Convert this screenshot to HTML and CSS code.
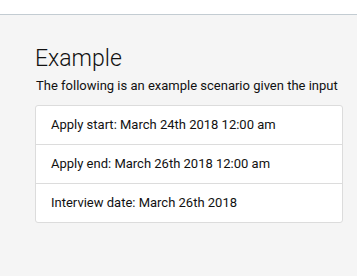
FILE: index.html
```html
<!DOCTYPE html>
<html>
<head>
<meta charset="utf-8">
<link rel="stylesheet" href="styles.css">
</head>
<body>
<div class="topbar"></div>
<main class="content">
  <h2 class="title">Example</h2>
  <p class="lead">The following is an example scenario given the input</p>
  <ul class="list">
    <li class="item">Apply start: March 24th 2018 12:00 am</li>
    <li class="item">Apply end: March 26th 2018 12:00 am</li>
    <li class="item">Interview date: March 26th 2018</li>
  </ul>
</main>
</body>
</html>
```
FILE: styles.css
```css
html, body {
  margin: 0;
  padding: 0;
  height: 100%;
}
body {
  background: #f5f5f5;
  font-family: Roboto, "Liberation Sans", sans-serif;
  color: #111;
}
.topbar {
  height: 14px;
  background: #fff;
  border-bottom: 1px solid #c3ccd2;
}
.content {
  padding: 29px 14px 0 35px;
}
.title {
  margin: 0;
  font-size: 23px;
  font-weight: 300;
  line-height: 29px;
}
.lead {
  margin: 4px 0 10px 1px;
  font-size: 13px;
  line-height: 18px;
}
.list {
  list-style: none;
  margin: 0;
  padding: 0;
  background: #fff;
  border: 1px solid #dcdcdc;
  border-radius: 3px;
  width: 306px;
}
.item {
  padding: 0 15px;
  height: 38px;
  line-height: 38px;
  font-size: 13px;
  border-top: 1px solid #dcdcdc;
}
.item:first-child {
  border-top: none;
}
```
